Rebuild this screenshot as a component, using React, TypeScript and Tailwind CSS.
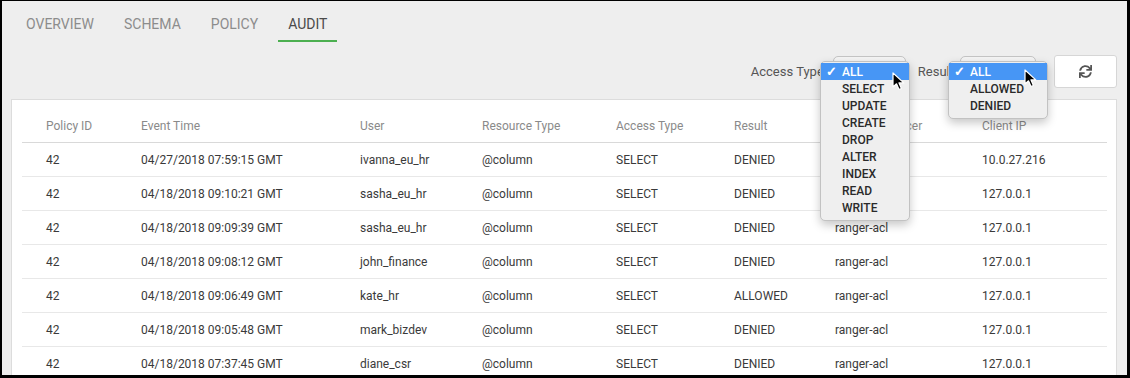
import React from "react";
import { FaSync } from "react-icons/fa";

const rows = [
  ["42", "04/27/2018 07:59:15 GMT", "ivanna_eu_hr", "@column", "SELECT", "DENIED", "ranger-acl", "10.0.27.216"],
  ["42", "04/18/2018 09:10:21 GMT", "sasha_eu_hr", "@column", "SELECT", "DENIED", "ranger-acl", "127.0.0.1"],
  ["42", "04/18/2018 09:09:39 GMT", "sasha_eu_hr", "@column", "SELECT", "DENIED", "ranger-acl", "127.0.0.1"],
  ["42", "04/18/2018 09:08:12 GMT", "john_finance", "@column", "SELECT", "DENIED", "ranger-acl", "127.0.0.1"],
  ["42", "04/18/2018 09:06:49 GMT", "kate_hr", "@column", "SELECT", "ALLOWED", "ranger-acl", "127.0.0.1"],
  ["42", "04/18/2018 09:05:48 GMT", "mark_bizdev", "@column", "SELECT", "DENIED", "ranger-acl", "127.0.0.1"],
  ["42", "04/18/2018 07:37:45 GMT", "diane_csr", "@column", "SELECT", "DENIED", "ranger-acl", "127.0.0.1"],
];

const headers = ["Policy ID", "Event Time", "User", "Resource Type", "Access Type", "Result", "Access Enforcer", "Client IP"];

const gridCols = "grid grid-cols-[95px_219px_122px_134px_118px_101px_147px_1fr] pl-[24px]";

function Cursor() {
  return (
    <svg width="13" height="19" viewBox="0 0 13 19" className="block">
      <path d="M1 1 L1 15 L4.5 11.8 L7 17.5 L9.4 16.5 L7 10.9 L11.8 10.9 Z" fill="#000" stroke="#fff" strokeWidth="1.2" strokeLinejoin="round" />
    </svg>
  );
}

function Menu({ items, width }: { items: string[]; width: string }) {
  return (
    <div className={`${width} rounded-[5px] border border-[#c2c2c2] bg-[#efefef] pt-[1px] pb-[4px] shadow-[0_4px_10px_rgba(0,0,0,0.22)]`}>
      {items.map((it, i) => (
        <div
          key={it}
          className={`flex h-[17px] items-center ${i === 0 ? "bg-[#4796f5] text-white" : "text-[#2a2a2a]"}`}
        >
          <span className="w-[21px] pl-[5px] text-[13px] font-bold leading-none">{i === 0 ? "✓" : ""}</span>
          <span className="text-[12px] font-medium leading-none">{it}</span>
        </div>
      ))}
    </div>
  );
}

export default function App() {
  return (
    <div
      className="relative h-[378px] w-[1130px] overflow-hidden border-b-[3px] border-l-2 border-r-[3px] border-t border-black bg-[#eeeeee]"
      style={{ fontFamily: "Roboto, 'Liberation Sans', sans-serif" }}
    >
      {/* Tabs */}
      <div className="flex gap-[10px] pl-[14px] pt-[13px]">
        {["OVERVIEW", "SCHEMA", "POLICY", "AUDIT"].map((t) => (
          <div
            key={t}
            className={`px-[10px] pb-[6px] text-[14px] leading-[20px] ${
              t === "AUDIT" ? "border-b-2 border-[#4caf50] text-[#4a4a4a]" : "border-b-2 border-transparent text-[#8c8c8c]"
            }`}
          >
            {t}
          </div>
        ))}
      </div>

      {/* Filters */}
      <div className="mt-[13px] flex items-center justify-end pr-[10px]">
        <span className="text-[13px] text-[#555]">Access Type</span>
        <div className="ml-[9px] h-[31px] w-[73px] rounded-[5px] border border-[#c4c4c4] bg-[#f4f4f4]" />
        <span className="ml-[12px] text-[13px] text-[#555]">Result</span>
        <div className="ml-[6px] h-[31px] w-[76px] rounded-[5px] border border-[#c4c4c4] bg-[#f4f4f4]" />
        <button className="ml-[18px] flex h-[33px] w-[63px] items-center justify-center rounded-[3px] border border-[#d6d6d6] bg-white text-[#555]">
          <FaSync size={13} />
        </button>
      </div>

      {/* Card */}
      <div className="ml-[9px] mr-[10px] mt-[11px] border border-[#dcdcdc] bg-white pl-[10px] pr-[9px] pt-[9px]">
        <div className={`${gridCols} h-[34px] items-center border-b border-[#d9d9d9] text-[12px] text-[#8a8a8a]`}>
          {headers.map((h) => (
            <div key={h} className="whitespace-nowrap">{h}</div>
          ))}
        </div>
        {rows.map((r, i) => (
          <div key={i} className={`${gridCols} h-[34px] items-center border-b border-[#e8e8e8] text-[12px] text-[#3a3a3a]`}>
            {r.map((c, j) => (
              <div key={j} className="whitespace-nowrap">{c}</div>
            ))}
          </div>
        ))}
      </div>

      {/* Open dropdown menus (overlay) */}
      <div className="absolute left-[818px] top-[60px]">
        <Menu width="w-[90px]" items={["ALL", "SELECT", "UPDATE", "CREATE", "DROP", "ALTER", "INDEX", "READ", "WRITE"]} />
      </div>
      <div className="absolute left-[946px] top-[60px]">
        <Menu width="w-[100px]" items={["ALL", "ALLOWED", "DENIED"]} />
      </div>

      {/* Cursors */}
      <div className="absolute left-[890px] top-[71px]">
        <Cursor />
      </div>
      <div className="absolute left-[1022px] top-[68px]">
        <Cursor />
      </div>
    </div>
  );
}
